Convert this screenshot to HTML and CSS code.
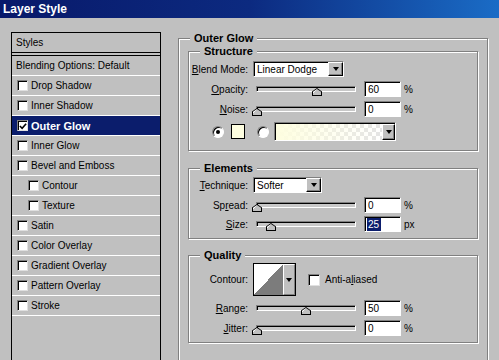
FILE: index.html
```html
<!DOCTYPE html>
<html lang="en">
<head>
  <meta charset="UTF-8" />
  <title>Layer Style</title>
  <link rel="stylesheet" href="styles.css">
</head>
<body>

  <div class="titlebar">Layer Style</div>

  <div class="dialog">

    <!-- Style list -->
    <div class="style-list">
      <div class="list-head">Styles</div>
      <div class="list-item blending">Blending Options: Default</div>
      <div class="list-item"><span class="check"></span>Drop Shadow</div>
      <div class="list-item"><span class="check"></span>Inner Shadow</div>
      <div class="list-item selected">
        <span class="check"><svg width="9" height="9" viewBox="0 0 9 9"><path d="M1 4 L3.5 6.5 L8 1.5" fill="none" stroke="#000" stroke-width="1.8"/></svg></span>Outer Glow
      </div>
      <div class="list-item"><span class="check"></span>Inner Glow</div>
      <div class="list-item"><span class="check"></span>Bevel and Emboss</div>
      <div class="list-item sub"><span class="check"></span>Contour</div>
      <div class="list-item sub"><span class="check"></span>Texture</div>
      <div class="list-item"><span class="check"></span>Satin</div>
      <div class="list-item"><span class="check"></span>Color Overlay</div>
      <div class="list-item"><span class="check"></span>Gradient Overlay</div>
      <div class="list-item"><span class="check"></span>Pattern Overlay</div>
      <div class="list-item"><span class="check"></span>Stroke</div>
    </div>

    <!-- Outer Glow options -->
    <div class="group outer">
      <div class="group-title">Outer Glow</div>

      <div class="group structure">
        <div class="group-title">Structure</div>
        <div class="row first">
          <span class="label"><u>B</u>lend Mode:</span>
          <div class="select blend"><span class="select-text">Linear Dodge</span><span class="select-btn"></span></div>
        </div>
        <div class="row">
          <span class="label"><u>O</u>pacity:</span>
          <div class="slider"><div class="track"></div><span class="thumb" style="left: 60%"></span></div>
          <div class="field">60</div><span class="unit">%</span>
        </div>
        <div class="row">
          <span class="label"><u>N</u>oise:</span>
          <div class="slider"><div class="track"></div><span class="thumb" style="left: 0%"></span></div>
          <div class="field">0</div><span class="unit">%</span>
        </div>
        <div class="row color-row">
          <span class="radio on"></span>
          <span class="swatch"></span>
          <span class="radio second"></span>
          <div class="gradient"><span class="gradient-fill"></span><span class="select-btn"></span></div>
        </div>
      </div>

      <div class="group elements">
        <div class="group-title">Elements</div>
        <div class="row first">
          <span class="label"><u>T</u>echnique:</span>
          <div class="select technique"><span class="select-text">Softer</span><span class="select-btn"></span></div>
        </div>
        <div class="row">
          <span class="label">Sp<u>r</u>ead:</span>
          <div class="slider"><div class="track"></div><span class="thumb" style="left: 0%"></span></div>
          <div class="field">0</div><span class="unit">%</span>
        </div>
        <div class="row size-row">
          <span class="label"><u>S</u>ize:</span>
          <div class="slider"><div class="track"></div><span class="thumb" style="left: 14%"></span></div>
          <div class="field"><span class="hilite">25</span></div><span class="unit">px</span>
        </div>
      </div>

      <div class="group quality">
        <div class="group-title">Quality</div>
        <div class="row contour-row">
          <span class="label">Contour:</span>
          <div class="contour"><span class="contour-curve"></span><span class="select-btn"></span></div>
          <span class="check aa"></span><span class="aa-text">Anti-a<u>l</u>iased</span>
        </div>
        <div class="row">
          <span class="label"><u>R</u>ange:</span>
          <div class="slider"><div class="track"></div><span class="thumb" style="left: 49%"></span></div>
          <div class="field">50</div><span class="unit">%</span>
        </div>
        <div class="row">
          <span class="label"><u>J</u>itter:</span>
          <div class="slider"><div class="track"></div><span class="thumb" style="left: 0%"></span></div>
          <div class="field">0</div><span class="unit">%</span>
        </div>
      </div>
    </div>

  </div>

</body>
</html>
```

FILE: styles.css
```css
* {
  box-sizing: border-box;
}
body {
  margin: 0;
  width: 499px;
  height: 360px;
  overflow: hidden;
  background: #c0c0c0;
  font-family: "Liberation Sans", Arial, sans-serif;
  font-size: 10px;
  color: #000;
}
u {
  text-decoration: underline;
  text-underline-offset: 1px;
}
.titlebar {
  height: 18px;
  padding-left: 3px;
  background: linear-gradient(to right, #08196a 0%, #0c2a80 50%, #1a6cc6 100%);
  color: #fff;
  font-weight: bold;
  font-size: 12px;
  line-height: 18px;
}
.dialog {
  display: flex;
  align-items: flex-start;
  padding: 14px 0 0 11px;
}

/* Style list */
.style-list {
  flex-shrink: 0;
  width: 150px;
  height: 340px;
  border: 1px solid #000;
  border-bottom: none;
}
.list-head {
  height: 20px;
  line-height: 19px;
  padding-left: 4px;
  border-bottom: 1px solid #000;
}
.list-item {
  display: flex;
  align-items: center;
  height: 20px;
  padding-left: 5px;
  border-bottom: 1px solid #fff;
}
.list-item.blending {
  height: 21px;
  margin-top: 2px;
  padding-left: 4px;
  border-top: 1px solid #000;
}
.list-item.sub {
  padding-left: 16px;
}
.list-item.selected {
  background: #0b1d6c;
  color: #fff;
  font-weight: bold;
  font-size: 11px;
}
.check {
  flex-shrink: 0;
  display: flex;
  align-items: center;
  justify-content: center;
  width: 11px;
  height: 11px;
  margin-right: 3px;
  background: #fff;
  border: 1px solid;
  border-color: #808080 #e0e0e0 #e0e0e0 #808080;
  box-shadow: inset 1px 1px 0 #000;
}
.check svg {
  margin: 1px 0 0 1px;
}

/* Group boxes */
.group {
  border: 1px solid #808080;
  box-shadow: inset 1px 1px 0 #fff, 1px 1px 0 #fff;
}
.group-title {
  width: fit-content;
  margin: -7px 0 0 11px;
  padding: 0 4px;
  background: #c0c0c0;
  font-weight: bold;
  font-size: 11px;
  line-height: 13px;
}
.outer {
  width: 310px;
  height: 330px;
  margin: 6px 0 0 17px;
}
.structure {
  margin: 6px 9px 0;
  padding-bottom: 9px;
}
.elements {
  margin: 17px 9px 0;
  padding-bottom: 6px;
}
.quality {
  margin: 16px 9px 0;
  padding-bottom: 6px;
}

/* Rows */
.row {
  display: flex;
  align-items: center;
  height: 16px;
  margin-top: 4px;
}
.row.first {
  margin-top: 3px;
}
.elements .row.first {
  margin-top: 2px;
}
.size-row {
  margin-top: 3px;
}
.label {
  flex-shrink: 0;
  width: 59px;
  text-align: right;
  white-space: nowrap;
}

/* Dropdowns */
.select {
  display: flex;
  align-items: stretch;
  height: 16px;
  margin-left: 5px;
  background: #fff;
  border: 1px solid;
  border-color: #808080 #fff #fff #808080;
  box-shadow: inset 1px 1px 0 #000;
}
.select.blend {
  width: 91px;
}
.select.technique {
  width: 69px;
}
.select-text {
  flex: 1;
  padding: 1px 0 0 3px;
  line-height: 13px;
}
.select-btn {
  flex-shrink: 0;
  display: flex;
  align-items: center;
  justify-content: center;
  width: 15px;
  background: #c0c0c0;
  border: 1px solid;
  border-color: #fff #000 #000 #fff;
  box-shadow: inset -1px -1px 0 #808080;
}
.select-btn::after {
  content: "";
  border-left: 3px solid transparent;
  border-right: 3px solid transparent;
  border-top: 4px solid #000;
}

/* Sliders */
.slider {
  position: relative;
  flex-shrink: 0;
  width: 100px;
  height: 16px;
  margin-left: 8px;
}
.track {
  height: 6px;
  margin-top: 5px;
  background: #c8c8c8;
  border: 1px solid;
  border-color: #808080 #fff #fff #808080;
  box-shadow: inset 1px 1px 0 #000;
}
.thumb {
  position: absolute;
  top: 7px;
  width: 10px;
  height: 8px;
  margin-left: -4px;
  background: #000;
  clip-path: polygon(50% 0, 100% 45%, 100% 100%, 0 100%, 0 45%);
}
.thumb::after {
  content: "";
  position: absolute;
  left: 1px;
  top: 1px;
  right: 1px;
  bottom: 1px;
  background: linear-gradient(135deg, #fff 0 30%, #c0c0c0 30%);
  clip-path: polygon(50% 0, 100% 45%, 100% 100%, 0 100%, 0 45%);
}
.field {
  flex-shrink: 0;
  width: 37px;
  height: 16px;
  margin-left: 8px;
  padding: 1px 0 0 3px;
  line-height: 13px;
  background: #fff;
  border: 1px solid;
  border-color: #808080 #fff #fff #808080;
  box-shadow: inset 1px 1px 0 #000;
}
.hilite {
  display: inline-block;
  padding: 0 2px 0 1px;
  margin-left: -1px;
  background: #0b1d6c;
  color: #fff;
}
.unit {
  margin-left: 3px;
}

/* Colour row */
.color-row {
  height: 19px;
  margin-top: 5px;
}
.radio {
  flex-shrink: 0;
  display: flex;
  align-items: center;
  justify-content: center;
  width: 12px;
  height: 12px;
  margin-left: 23px;
  border-radius: 50%;
  background: #fff;
  border: 1px solid;
  border-color: #808080 #fff #fff #808080;
  box-shadow: inset 1px 1px 0 #000;
}
.radio.on::after {
  content: "";
  width: 4px;
  height: 4px;
  border-radius: 50%;
  background: #000;
}
.radio.second {
  margin-left: 12px;
}
.swatch {
  flex-shrink: 0;
  width: 14px;
  height: 15px;
  margin-left: 7px;
  background: #fefee0;
  border: 1px solid #000;
}
.gradient {
  display: flex;
  width: 122px;
  height: 19px;
  margin-left: 5px;
  border: 1px solid;
  border-color: #808080 #fff #fff #808080;
  box-shadow: inset 1px 1px 0 #000;
  padding: 1px 0 0 1px;
}
.gradient-fill {
  flex: 1;
  background:
    linear-gradient(to right, #fefee0 0%, rgba(254, 254, 224, 0) 100%),
    conic-gradient(#e4e4e4 25%, #fff 0 50%, #e4e4e4 0 75%, #fff 0) 0 0 / 8px 8px;
}
.gradient .select-btn {
  width: 13px;
}

/* Contour row */
.contour-row {
  height: 33px;
  margin-top: 1px;
}
.contour {
  display: flex;
  flex-shrink: 0;
  width: 43px;
  height: 33px;
  margin-left: 5px;
  border: 1px solid #000;
}
.contour-curve {
  flex: 1;
  background: linear-gradient(to bottom right, #fff 50%, #7c7c7c 50%);
}
.contour .select-btn {
  width: 12px;
  border-color: #fff #808080 #808080 #fff;
  box-shadow: none;
}
.check.aa {
  width: 12px;
  height: 12px;
  margin: 0 0 0 12px;
}
.aa-text {
  margin-left: 5px;
}
```
